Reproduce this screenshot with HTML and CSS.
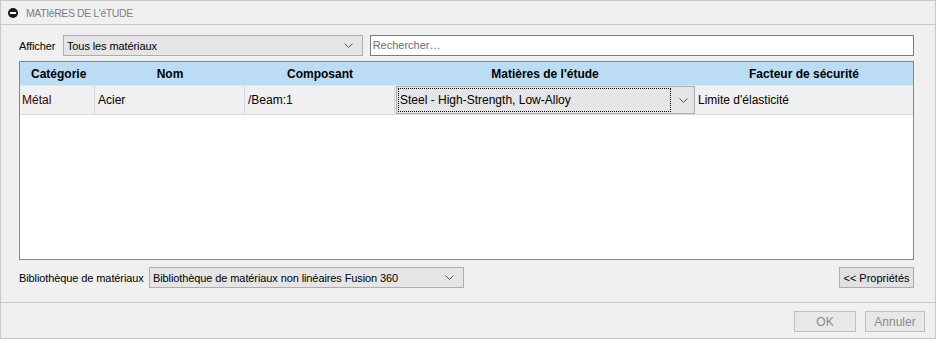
FILE: index.html
```html
<!DOCTYPE html>
<html lang="fr">
<head>
<meta charset="utf-8">
<link rel="stylesheet" href="styles.css">
</head>
<body>
<div class="panel">
  <div class="panel-head">
    <svg class="collapse" width="10" height="10" viewBox="0 0 10 10"><circle cx="5" cy="5" r="5" fill="#1a1a1a"/><rect x="2" y="4" width="6" height="2" fill="#fff"/></svg>
    <span class="title">MATIèRES DE L'éTUDE</span>
  </div>
  <div class="panel-body">
    <div class="filter-row">
      <span class="lbl">Afficher</span>
      <div class="select sel-show"><span>Tous les matériaux</span><svg class="chev" width="9" height="5" viewBox="0 0 9 5"><path d="M0.5 0.5 L4.5 4.5 L8.5 0.5" fill="none" stroke="#555" stroke-width="1"/></svg></div>
      <div class="search">Rechercher…</div>
    </div>
    <div class="grid">
      <div class="grid-head">
        <div class="c c1">Catégorie</div>
        <div class="c c2">Nom</div>
        <div class="c c3">Composant</div>
        <div class="c c4">Matières de l'étude</div>
        <div class="c c5">Facteur de sécurité</div>
      </div>
      <div class="grid-row">
        <div class="c c1 red">Métal</div>
        <div class="c c2">Acier</div>
        <div class="c c3">/Beam:1</div>
        <div class="c c4"><div class="cell-select"><span class="focus">Steel - High-Strength, Low-Alloy</span><svg class="chev" width="9" height="5" viewBox="0 0 9 5"><path d="M0.5 0.5 L4.5 4.5 L8.5 0.5" fill="none" stroke="#555" stroke-width="1"/></svg></div></div>
        <div class="c c5">Limite d'élasticité</div>
      </div>
    </div>
    <div class="lib-row">
      <span class="lbl">Bibliothèque de matériaux</span>
      <div class="select sel-lib"><span>Bibliothèque de matériaux non linéaires Fusion 360</span><svg class="chev" width="9" height="5" viewBox="0 0 9 5"><path d="M0.5 0.5 L4.5 4.5 L8.5 0.5" fill="none" stroke="#555" stroke-width="1"/></svg></div>
      <div class="spacer"></div>
      <div class="btn btn-props">&lt;&lt; Propriétés</div>
    </div>
  </div>
  <div class="panel-foot">
    <div class="btn disabled ok">OK</div>
    <div class="btn disabled cancel">Annuler</div>
  </div>
</div>
</body>
</html>
```

FILE: styles.css
```css
* { box-sizing: border-box; }
html, body { margin: 0; padding: 0; background: #ffffff; }
body {
  font-family: "Liberation Sans", Arial, sans-serif;
  font-size: 11px;
  color: #000;
}
.panel {
  width: 936px;
  height: 339px;
  border: 1px solid #c8c8c8;
  background: #f0f0f0;
  display: flex;
  flex-direction: column;
}
.panel-head {
  height: 24px;
  border-bottom: 1px solid #c8c8c8;
  display: flex;
  align-items: center;
  padding-left: 7px;
}
.collapse { display: block; margin-right: 8px; }
.title {
  color: #7d7d8c;
  font-size: 10.5px;
  letter-spacing: -0.4px;
}
.panel-body {
  height: 278px;
  border-bottom: 1px solid #c8c8c8;
  padding: 10px 21px 0 18px;
  display: flex;
  flex-direction: column;
}
.filter-row {
  display: flex;
  align-items: center;
  height: 21px;
}
.lbl { white-space: nowrap; letter-spacing: -0.1px; }
.filter-row .lbl { width: 44px; }
.select {
  height: 21px;
  border: 1px solid #adadad;
  background: #e5e5e5;
  display: flex;
  align-items: center;
  justify-content: space-between;
  padding: 0 9px 0 3px;
  white-space: nowrap;
  letter-spacing: -0.1px;
}
.sel-show { width: 300px; }
.chev { display: block; }
.search {
  margin-left: 7px;
  width: 545px;
  height: 21px;
  border: 1px solid #7a7a7a;
  background: #fff;
  color: #6d6d6d;
  padding: 3px 2px 0 2px;
}
.grid {
  margin-top: 5px;
  height: 199px;
  border: 1px solid #828790;
  background: #fff;
}
.grid-head {
  display: flex;
  height: 23px;
  background: #bcdcf4;
  font-weight: bold;
  font-size: 12px;
}
.grid-head .c {
  display: flex;
  align-items: center;
  justify-content: center;
}
.grid-head .c1 { justify-content: flex-start; padding-left: 11px; }
.c1 { width: 75px; }
.c2 { width: 150px; }
.c3 { width: 150px; }
.c4 { width: 300px; }
.c5 { width: 218px; }
.grid-row {
  display: flex;
  height: 30px;
  background: #f0f0f0;
  border-top: 1px solid #e3e3e3;
  border-bottom: 1px solid #dadada;
  font-size: 12px;
}
.grid-row .c {
  display: flex;
  align-items: center;
  padding-left: 2px;
  border-right: 1px solid #dadada;
}
.grid-row .c2 { padding-left: 3px; }
.grid-row .c3 { padding-left: 3px; }
.grid-row .c4 { padding: 0; border-right: none; }
.grid-row .c5 { padding-left: 3px; border-right: none; }
.red { color: #3c0000; }
.cell-select {
  width: 300px;
  height: 28px;
  margin-left: 1px;
  border: 1px solid #adadad;
  background: #e5e5e5;
  display: flex;
  align-items: center;
  justify-content: space-between;
  padding: 1px 6px 1px 1px;
}
.focus {
  flex: 1;
  height: 24px;
  border: 1px dotted #000;
  margin-right: 8px;
  display: flex;
  align-items: center;
  padding-left: 1px;
}
.lib-row {
  margin-top: 7px;
  display: flex;
  align-items: center;
  height: 21px;
}
.lib-row .lbl { width: 130px; }
.sel-lib { width: 315px; }
.spacer { flex: 1; }
.btn {
  height: 21px;
  border: 1px solid #adadad;
  background: #e1e1e1;
  display: flex;
  align-items: center;
  justify-content: center;
  white-space: nowrap;
}
.btn-props { width: 75px; }
.panel-foot {
  flex: 1;
  display: flex;
  justify-content: flex-end;
  align-items: flex-start;
  padding: 8px 10px 0 0;
  gap: 9px;
}
.disabled {
  color: #8a8a8a;
  border-color: #bfbfbf;
  background: #e8e8e8;
  font-size: 12px;
}
.ok { width: 62px; }
.cancel { width: 60px; }
```
